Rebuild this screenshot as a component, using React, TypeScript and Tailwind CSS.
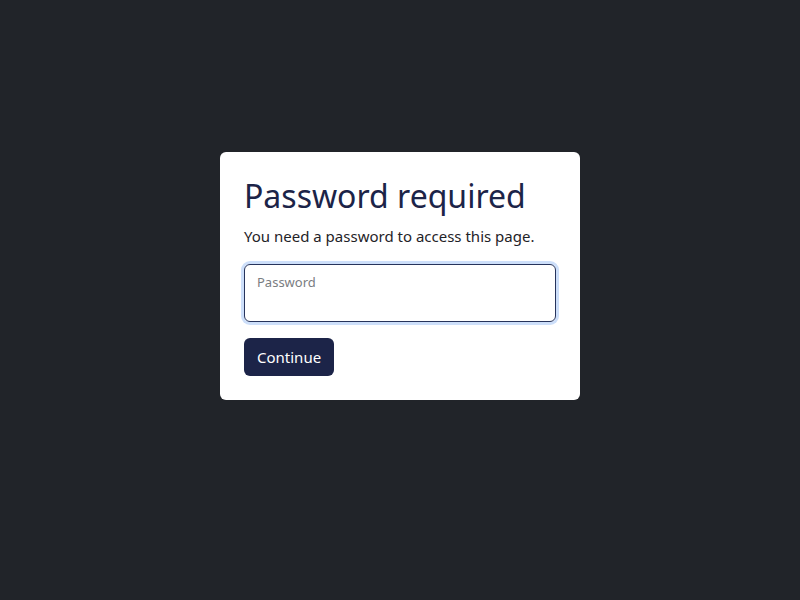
import React, { useState } from 'react';

const App = () => {
  const [password, setPassword] = useState('');

  return (
    <div
      className="flex min-h-screen w-full items-center justify-center bg-[#212429] pb-12"
      style={{ fontFamily: '"Noto Sans", sans-serif' }}
    >
      <div className="w-[360px] rounded-md bg-white p-6">
        <h1 className="text-[32px] leading-[40px] text-[#1c2448]">Password required</h1>
        <p className="mt-2 text-[15px] leading-6 text-[#1f2328]">You need a password to access this page.</p>
        <div className="mt-4 rounded-md border border-[#27345c] px-3 pt-[7px] pb-[7px] ring-[3px] ring-[#cddffa]">
          <label className="block text-[13px] leading-5 text-[#7a7d82]">Password</label>
          <input
            type="password"
            autoFocus
            value={password}
            onChange={(e) => setPassword(e.target.value)}
            className="block h-[22px] w-full bg-transparent text-[15px] text-[#1f2328] caret-[#1f2328] outline-none"
          />
        </div>
        <button className="mt-4 h-[38px] rounded-md bg-[#1c2448] px-[13px] text-[15px] leading-6 text-white">
          Continue
        </button>
      </div>
    </div>
  );
};

export default App;
